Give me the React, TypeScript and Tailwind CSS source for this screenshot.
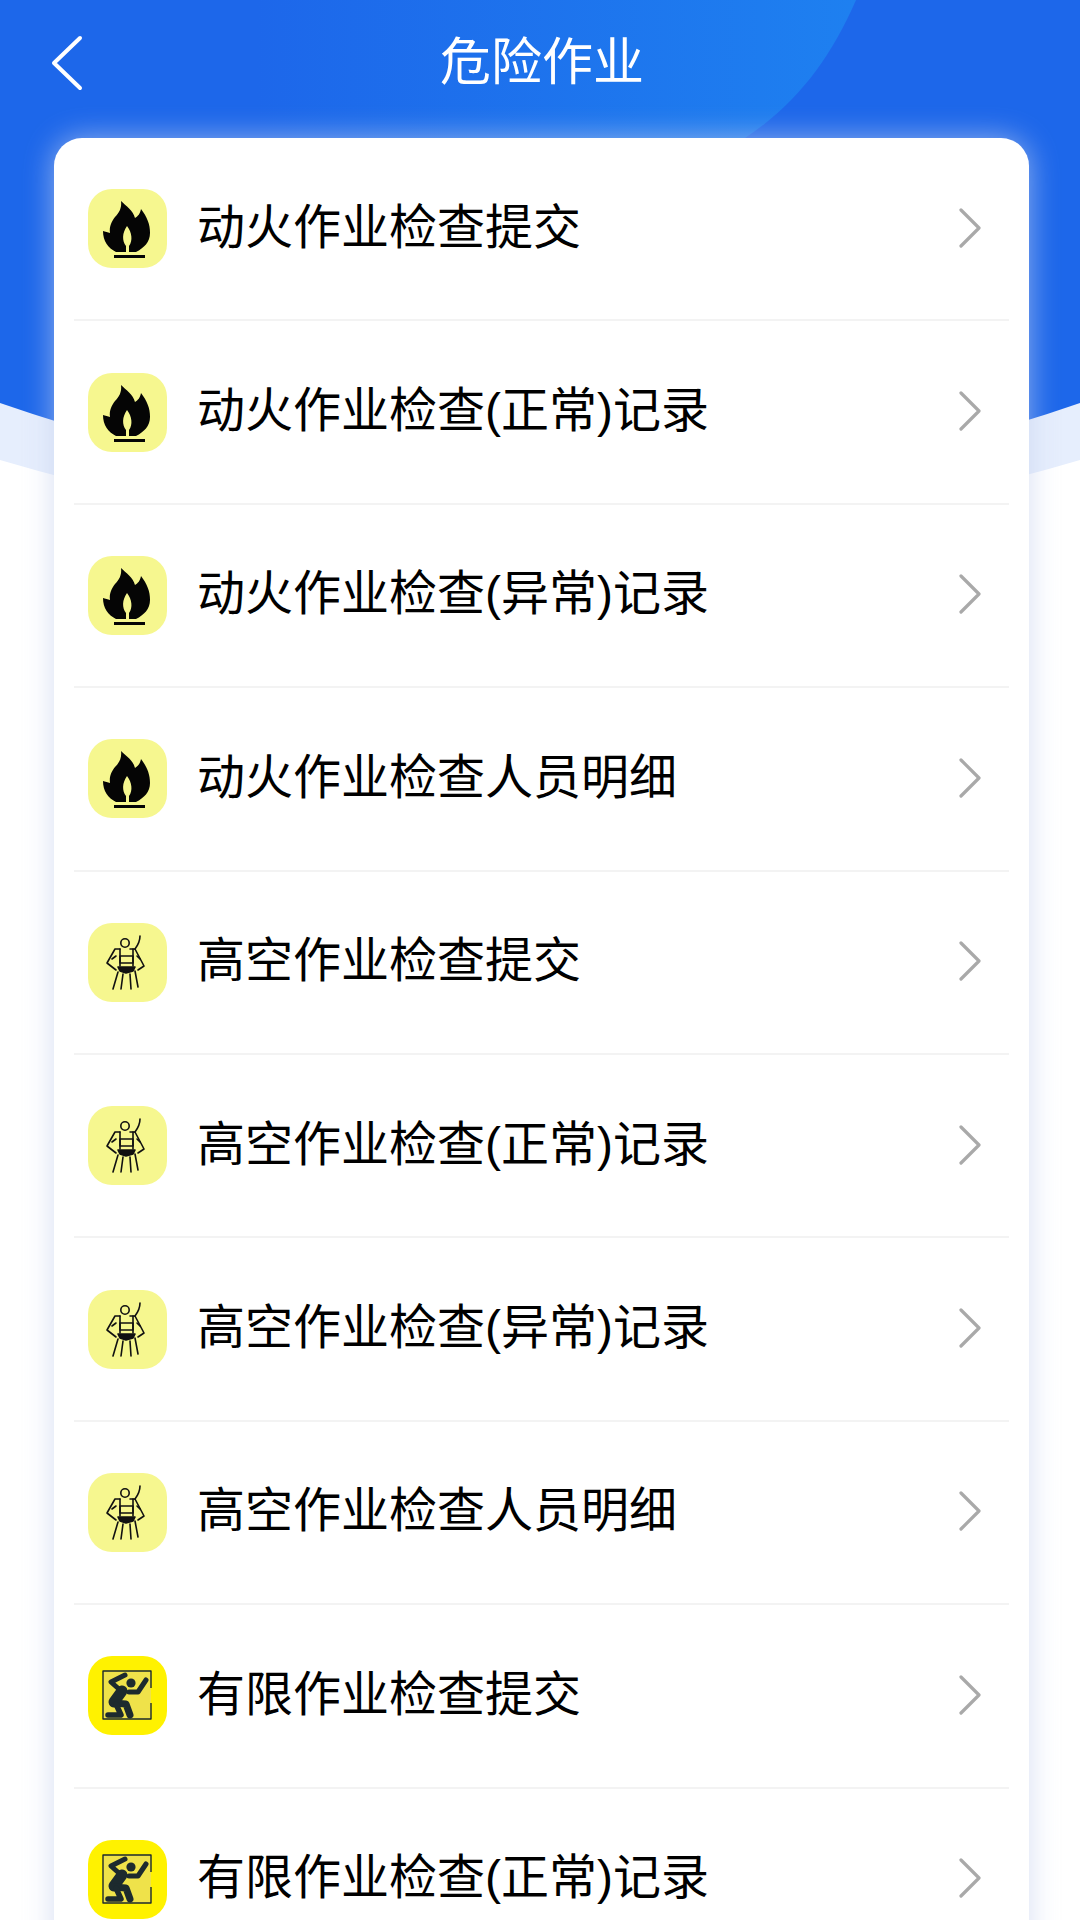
import React from 'react';

const FONT = "font-['Liberation_Sans','Noto_Sans_CJK_SC',sans-serif]";

function FireIcon() {
  return (
    <div className="w-[79px] h-[79px] mt-[2px] rounded-[24px] bg-[#f6f78f] shrink-0">
      <svg viewBox="0 0 79 79" className="w-full h-full">
        <path
          d="M33 12C38 17 45 21 47 29C50 27 52 25 53 20C59 28 62 35 62 44C62 53 56 59 48 63H28C20 59 15 52 15 42C17 43 20 43 22 44C21 37 24 32 27 28C31 24 34 19 33 12Z"
          fill="#050505"
        />
        <path d="M39 37C44 43 45 52 41 57V63H38V57C34 52 34 44 39 37Z" fill="#f6f78f" />
        <rect x="26" y="66" width="31" height="3" fill="#050505" />
      </svg>
    </div>
  );
}

function HarnessIcon() {
  return (
    <div className="w-[79px] h-[79px] mt-[2px] rounded-[24px] bg-[#f6f78f] shrink-0">
      <svg viewBox="0 0 79 79" className="w-full h-full" fill="none" stroke="#111" strokeWidth="1.6" strokeLinecap="round" strokeLinejoin="round">
        <circle cx="37" cy="20" r="4.2" />
        <path d="M52 13C52 19 50 22 47 26" />
        <path d="M32 26H27L19 40L28 47" />
        <path d="M42 26H47L56 43L50 47" />
        <path d="M24 36L28 33M32 26V43M45 26V43M52 36L49 33" />
        <rect x="32" y="33" width="13" height="7" />
        <path d="M30 44H47L45 48L38 50L32 48Z" fill="#111" />
        <path d="M30 49L25 66M35 51L33 66M42 51L43 66M47 48L50 64" />
      </svg>
    </div>
  );
}

function ConfinedIcon() {
  return (
    <div className="w-[79px] h-[79px] mt-[2px] rounded-[24px] bg-[#fff200] shrink-0">
      <svg viewBox="0 0 79 79" className="w-full h-full" fill="none" stroke="#1d2a2e" strokeLinecap="round" strokeLinejoin="round">
        <rect x="15" y="15" width="48" height="48" fill="#efe24a" stroke="none" />
        <path d="M63 32V15H15V63H63V47" strokeWidth="1.4" strokeLinecap="butt" />
        <circle cx="43" cy="27" r="4.6" fill="#1d2a2e" stroke="none" />
        <path d="M37 19L23 26L32 34" strokeWidth="5" />
        <path d="M34 35L26 46" strokeWidth="11" />
        <path d="M41 36H50L58 24" strokeWidth="5" />
        <path d="M25 47L38 48L42 59" strokeWidth="7" />
        <path d="M28 48L33 59H20" strokeWidth="5.5" />
      </svg>
    </div>
  );
}

const rows = [
  { icon: <FireIcon />, label: '动火作业检查提交' },
  { icon: <FireIcon />, label: '动火作业检查(正常)记录' },
  { icon: <FireIcon />, label: '动火作业检查(异常)记录' },
  { icon: <FireIcon />, label: '动火作业检查人员明细' },
  { icon: <HarnessIcon />, label: '高空作业检查提交' },
  { icon: <HarnessIcon />, label: '高空作业检查(正常)记录' },
  { icon: <HarnessIcon />, label: '高空作业检查(异常)记录' },
  { icon: <HarnessIcon />, label: '高空作业检查人员明细' },
  { icon: <ConfinedIcon />, label: '有限作业检查提交' },
  { icon: <ConfinedIcon />, label: '有限作业检查(正常)记录' },
];

export default function App() {
  return (
    <div className={`relative w-[1080px] h-[1920px] overflow-hidden bg-white ${FONT}`}>
      {/* header backdrop */}
      <svg viewBox="0 0 1080 500" className="absolute top-0 left-0 w-[1080px] h-[500px]">
        <defs>
          <linearGradient id="sheen" x1="0" y1="0" x2="1" y2="0">
            <stop offset="0.3" stopColor="#1d67ea" />
            <stop offset="1" stopColor="#1e80f0" />
          </linearGradient>
        </defs>
        <path d="M0 460Q540 620 1080 460V0H0Z" fill="#e6eefd" />
        <path d="M0 403Q540 590 1080 403V0H0Z" fill="#1d67ea" />
        <path d="M0 0H856C830 60 795 105 745 138H0Z" fill="url(#sheen)" />
      </svg>

      <div className="relative grid grid-cols-[1fr_auto_1fr] items-center h-[125px] px-[50px] mb-[13px]">
        <svg width="34" height="56" viewBox="0 0 34 56" fill="none" stroke="white" strokeWidth="4" strokeLinecap="round" strokeLinejoin="round">
          <path d="M30 3L4 28L30 53" />
        </svg>
        <div className="text-[51px] leading-none text-white translate-x-[2px]">危险作业</div>
        <div />
      </div>

      <div className="relative ml-[54px] mr-[51px] rounded-[28px] bg-white shadow-[0_0_30px_rgba(196,208,238,0.7)]">
        {rows.map((row, i) => (
          <div key={i} className="mx-[20px] h-[183.4px] flex items-center pl-[14px] pr-[28px] pb-[2px] border-b-2 border-[#f3f3f3]">
            {row.icon}
            <div className="ml-[30px] flex-1 text-[48px] leading-none text-black whitespace-nowrap">{row.label}</div>
            <svg width="22" height="42" viewBox="0 0 22 42" fill="none" stroke="#a9a9a9" strokeWidth="3.2" strokeLinecap="round" strokeLinejoin="round">
              <path d="M2 3L20 21L2 39" />
            </svg>
          </div>
        ))}
      </div>
    </div>
  );
}
